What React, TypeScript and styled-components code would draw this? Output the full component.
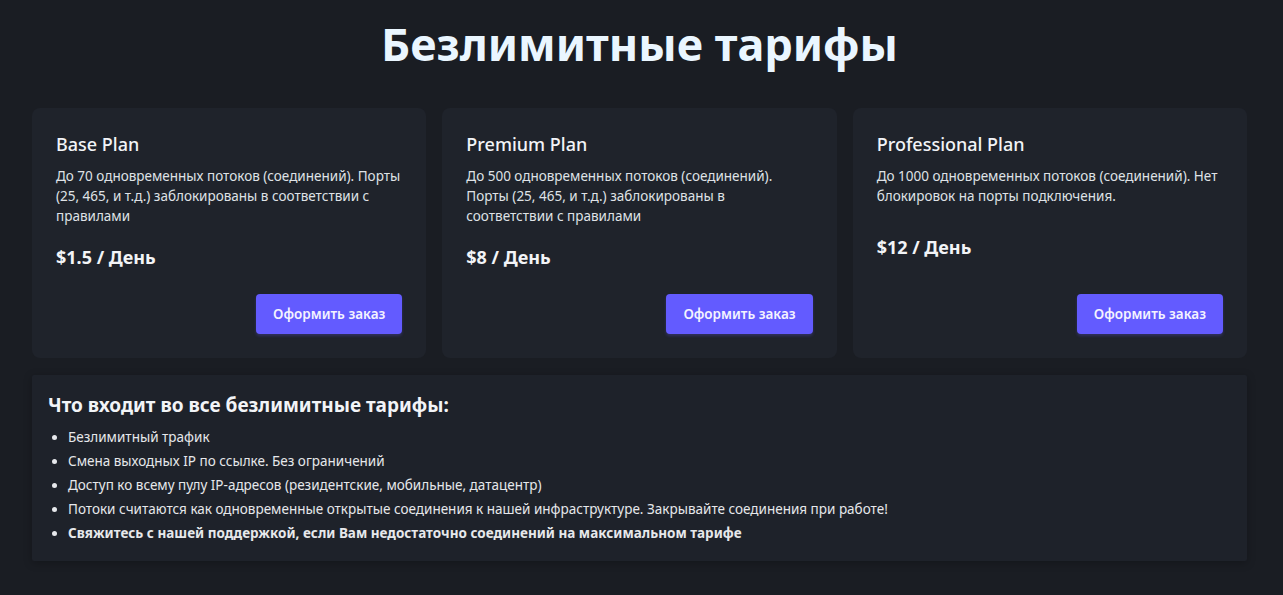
import React from "react"
import styled, { createGlobalStyle } from "styled-components"

type Plan = {
  name: string
  description: string
  price: string
}

const plans: Plan[] = [
  {
    name: "Base Plan",
    description:
      "До 70 одновременных потоков (соединений). Порты (25, 465, и т.д.) заблокированы в соответствии с правилами",
    price: "$1.5 / День",
  },
  {
    name: "Premium Plan",
    description:
      "До 500 одновременных потоков (соединений). Порты (25, 465, и т.д.) заблокированы в соответствии с правилами",
    price: "$8 / День",
  },
  {
    name: "Professional Plan",
    description: "До 1000 одновременных потоков (соединений). Нет блокировок на порты подключения.",
    price: "$12 / День",
  },
]

const features = [
  "Безлимитный трафик",
  "Смена выходных IP по ссылке. Без ограничений",
  "Доступ ко всему пулу IP-адресов (резидентские, мобильные, датацентр)",
  "Потоки считаются как одновременные открытые соединения к нашей инфраструктуре. Закрывайте соединения при работе!",
]

export default function App() {
  return (
    <>
      <GlobalStyle />
      <Page>
        <Title>Безлимитные тарифы</Title>
        <Grid>
          {plans.map(plan => (
            <Card key={plan.name}>
              <PlanName>{plan.name}</PlanName>
              <Description>{plan.description}</Description>
              <PriceArea>
                <Price>{plan.price}</Price>
              </PriceArea>
              <Actions>
                <OrderButton type="button">Оформить заказ</OrderButton>
              </Actions>
            </Card>
          ))}
        </Grid>
        <Included>
          <IncludedTitle>Что входит во все безлимитные тарифы:</IncludedTitle>
          <FeatureList>
            {features.map(f => (
              <Feature key={f}>{f}</Feature>
            ))}
            <Feature $bold>Свяжитесь с нашей поддержкой, если Вам недостаточно соединений на максимальном тарифе</Feature>
          </FeatureList>
        </Included>
      </Page>
    </>
  )
}

const GlobalStyle = createGlobalStyle`
  html, body {
    margin: 0;
    background: #1a1d23;
  }
  body {
    font-family: "Noto Sans", "Open Sans", sans-serif;
    color: #e6e8eb;
  }
`

const Page = styled.main`
  min-height: 595px;
  padding: 12px 36px 32px 32px;
  box-sizing: border-box;
`

const Title = styled.h1`
  margin: 0 0 32px;
  text-align: center;
  font-size: 45px;
  line-height: 64px;
  font-weight: 700;
  color: #eaf6ff;
`

const Grid = styled.div`
  display: grid;
  grid-template-columns: repeat(3, 1fr);
  gap: 16px;
  margin-bottom: 17px;
`

const Card = styled.section`
  display: flex;
  flex-direction: column;
  height: 250px;
  box-sizing: border-box;
  padding: 24px;
  background: #1f232b;
  border-radius: 8px;
`

const PlanName = styled.h3`
  margin: 0 0 10px;
  font-size: 18px;
  line-height: 24px;
  font-weight: 500;
  color: #f2f4f7;
`

const Description = styled.p`
  margin: 0;
  font-size: 13.5px;
  line-height: 20px;
  color: #dfe2e6;
`

// price sits centred in whatever room the description leaves
const PriceArea = styled.div`
  flex: 1;
  display: flex;
  align-items: center;
  padding-bottom: 7px;
`

const Price = styled.div`
  font-size: 18px;
  line-height: 28px;
  font-weight: 700;
  color: #f2f4f7;
`

const Actions = styled.div`
  display: flex;
  justify-content: flex-end;
`

const OrderButton = styled.button`
  height: 40px;
  padding: 0 17px;
  border: none;
  border-radius: 4px;
  background: #635bff;
  color: #f4f3ff;
  font-family: inherit;
  font-size: 13.5px;
  font-weight: 600;
  box-shadow: 0 2px 3px rgba(99, 91, 255, 0.25);
  cursor: pointer;
`

const Included = styled.section`
  padding: 16px;
  background: #1e222a;
  border-radius: 2px;
  box-shadow: 0 2px 8px rgba(0, 0, 0, 0.25);
`

const IncludedTitle = styled.h3`
  margin: 0 0 6px;
  font-size: 19px;
  line-height: 28px;
  font-weight: 700;
  color: #f2f4f7;
`

const FeatureList = styled.ul`
  margin: 0;
  padding-left: 20px;
`

const Feature = styled.li<{ $bold?: boolean }>`
  font-size: 13.5px;
  line-height: 24px;
  font-weight: ${p => (p.$bold ? 700 : 400)};
  color: #e6e8eb;
`
